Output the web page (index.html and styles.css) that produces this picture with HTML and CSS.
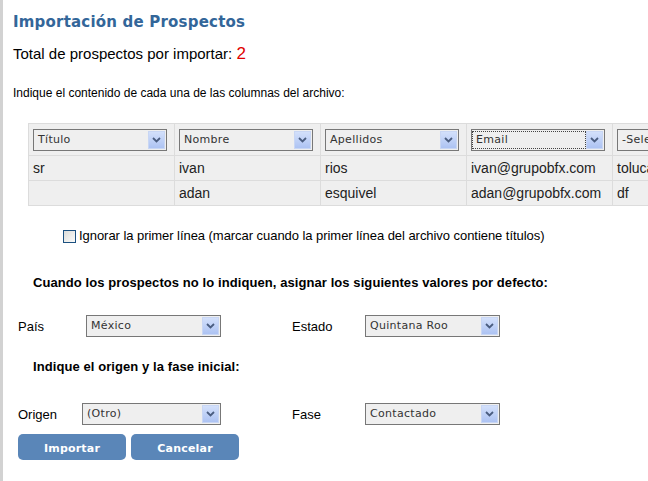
FILE: index.html
```html
<!DOCTYPE html>
<html lang="es">
<head>
<meta charset="utf-8">
<title>Importación de Prospectos</title>
<link rel="stylesheet" href="styles.css">
</head>
<body>
<div class="page">
  <h1 class="title">Importación de Prospectos</h1>
  <p class="total">Total de prospectos por importar: <span class="count">2</span></p>
  <p class="instr">Indique el contenido de cada una de las columnas del archivo:</p>

  <table class="grid">
    <tr class="head">
      <td><div class="sel"><span class="sel-text">Título</span><span class="sel-btn"><svg viewBox="0 0 9 6" width="9" height="6"><path d="M1 1 L4.5 4.5 L8 1" fill="none" stroke="#4a5d80" stroke-width="1.8"/></svg></span></div></td>
      <td><div class="sel"><span class="sel-text">Nombre</span><span class="sel-btn"><svg viewBox="0 0 9 6" width="9" height="6"><path d="M1 1 L4.5 4.5 L8 1" fill="none" stroke="#4a5d80" stroke-width="1.8"/></svg></span></div></td>
      <td><div class="sel"><span class="sel-text">Apellidos</span><span class="sel-btn"><svg viewBox="0 0 9 6" width="9" height="6"><path d="M1 1 L4.5 4.5 L8 1" fill="none" stroke="#4a5d80" stroke-width="1.8"/></svg></span></div></td>
      <td><div class="sel"><span class="sel-text focus">Email</span><span class="sel-btn"><svg viewBox="0 0 9 6" width="9" height="6"><path d="M1 1 L4.5 4.5 L8 1" fill="none" stroke="#4a5d80" stroke-width="1.8"/></svg></span></div></td>
      <td><div class="sel"><span class="sel-text">-Seleccione-</span><span class="sel-btn"><svg viewBox="0 0 9 6" width="9" height="6"><path d="M1 1 L4.5 4.5 L8 1" fill="none" stroke="#4a5d80" stroke-width="1.8"/></svg></span></div></td>
    </tr>
    <tr class="data">
      <td>sr</td><td>ivan</td><td>rios</td><td>ivan@grupobfx.com</td><td>toluca</td>
    </tr>
    <tr class="data">
      <td></td><td>adan</td><td>esquivel</td><td>adan@grupobfx.com</td><td>df</td>
    </tr>
  </table>

  <label class="ignore"><span class="chk"></span>Ignorar la primer línea (marcar cuando la primer línea del archivo contiene títulos)</label>

  <h2 class="section">Cuando los prospectos no lo indiquen, asignar los siguientes valores por defecto:</h2>

  <div class="field-row">
    <span class="lbl">País</span>
    <div class="sel form-sel"><span class="sel-text">México</span><span class="sel-btn"><svg viewBox="0 0 9 6" width="9" height="6"><path d="M1 1 L4.5 4.5 L8 1" fill="none" stroke="#4a5d80" stroke-width="1.8"/></svg></span></div>
    <span class="lbl lbl2">Estado</span>
    <div class="sel form-sel"><span class="sel-text">Quintana Roo</span><span class="sel-btn"><svg viewBox="0 0 9 6" width="9" height="6"><path d="M1 1 L4.5 4.5 L8 1" fill="none" stroke="#4a5d80" stroke-width="1.8"/></svg></span></div>
  </div>

  <h2 class="section section2">Indique el origen y la fase inicial:</h2>

  <div class="field-row row2">
    <span class="lbl lbl-origen">Origen</span>
    <div class="sel form-sel wide"><span class="sel-text">(Otro)</span><span class="sel-btn"><svg viewBox="0 0 9 6" width="9" height="6"><path d="M1 1 L4.5 4.5 L8 1" fill="none" stroke="#4a5d80" stroke-width="1.8"/></svg></span></div>
    <span class="lbl lbl2">Fase</span>
    <div class="sel form-sel"><span class="sel-text">Contactado</span><span class="sel-btn"><svg viewBox="0 0 9 6" width="9" height="6"><path d="M1 1 L4.5 4.5 L8 1" fill="none" stroke="#4a5d80" stroke-width="1.8"/></svg></span></div>
  </div>

  <div class="buttons">
    <button class="btn">Importar</button>
    <button class="btn">Cancelar</button>
  </div>
</div>
</body>
</html>
```
FILE: styles.css
```css
html, body {
  margin: 0;
  padding: 0;
  background: #fff;
  overflow: hidden;
}
body {
  width: 648px;
  height: 481px;
  font-family: "Liberation Sans", Arial, sans-serif;
  color: #000;
}
.page {
  border-left: 3px solid #d2d2d2;
  height: 481px;
  box-sizing: border-box;
  padding-left: 10px;
  padding-top: 1px;
  overflow: hidden;
}
.title {
  margin: 11px 0 0 0;
  font-family: "DejaVu Sans", Verdana, sans-serif;
  font-size: 15px;
  letter-spacing: 0.2px;
  font-weight: bold;
  color: #336699;
  line-height: 20px;
}
.total {
  margin: 13px 0 0 0;
  font-size: 15px;
  line-height: 18px;
}
.count {
  color: #e00000;
  font-size: 17px;
}
.instr {
  margin: 22px 0 0 0;
  font-size: 12px;
  line-height: 16px;
}
.grid {
  margin: 22px 0 0 15px;
  border-collapse: collapse;
  background: #efefef;
  table-layout: fixed;
  width: 730px;
}
.grid td {
  box-sizing: border-box;
  width: 146px;
  border: 1px solid #dcdcdc;
  padding: 0 0 0 4px;
  font-size: 14px;
  color: #222;
  vertical-align: middle;
  white-space: nowrap;
  overflow: hidden;
}
.grid tr.head td {
  height: 32px;
}
.grid tr.data td {
  height: 25px;
}
.sel {
  display: flex;
  align-items: center;
  box-sizing: border-box;
  width: 134px;
  height: 22px;
  border: 1px solid #777;
  background: #efefef;
  padding: 1px;
}
.sel-text {
  flex: 1;
  font-family: "DejaVu Sans", Verdana, sans-serif;
  font-size: 11px;
  letter-spacing: 0.3px;
  color: #333;
  padding-left: 3px;
  line-height: 16px;
  height: 16px;
  overflow: hidden;
  white-space: nowrap;
}
.sel-text.focus {
  outline: 1px dotted #444;
  margin-right: 1px;
}
.sel-btn {
  width: 17px;
  height: 18px;
  box-sizing: border-box;
  border: 1px solid #c8d6f4;
  background: linear-gradient(#d3e0fb, #adc3f3);
  display: flex;
  align-items: center;
  justify-content: center;
}
.ignore {
  display: flex;
  align-items: center;
  margin: 22px 0 0 50px;
  font-size: 13px;
  letter-spacing: -0.05px;
  line-height: 16px;
}
.chk {
  width: 11px;
  height: 11px;
  border: 1px solid #1c5180;
  background: linear-gradient(135deg, #dcdcd8, #fbfbfa);
  margin-right: 3px;
}
.section {
  margin: 31px 0 0 20px;
  font-size: 13px;
  font-weight: bold;
  letter-spacing: 0.08px;
  line-height: 16px;
}
.section2 {
  margin-top: 22px;
}
.field-row {
  display: flex;
  align-items: center;
  margin: 24px 0 0 5px;
  font-size: 13px;
}
.row2 {
  margin-top: 28px;
}
.lbl {
  width: 68px;
}
.lbl-origen {
  width: 64px;
}
.lbl2 {
  width: 73px;
  margin-left: 71px;
}
.form-sel {
  width: 135px;
}
.form-sel.wide {
  width: 139px;
}
.buttons {
  display: flex;
  gap: 5px;
  margin: 9px 0 0 5px;
}
.btn {
  width: 108px;
  height: 26px;
  border: none;
  border-radius: 5px;
  background: #5a86b8;
  color: #fff;
  font-family: "DejaVu Sans", Verdana, sans-serif;
  font-size: 11px;
  font-weight: bold;
  letter-spacing: 0.2px;
  padding: 3px 0 0 0;
}
```
